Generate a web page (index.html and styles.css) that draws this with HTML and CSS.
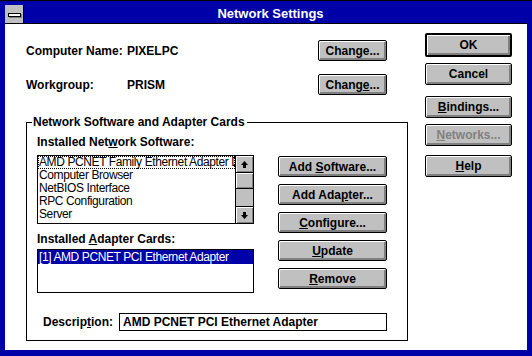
FILE: index.html
```html
<!DOCTYPE html>
<html lang="en">
<head>
    <meta charset="UTF-8">
    <title>Network Settings</title>
    <link rel="stylesheet" href="styles.css">
</head>
<body>

<div class="window">
    <div class="titlebar">
        <div class="sysmenu"><span class="sysbar"></span></div>
        <div class="title">Network Settings</div>
    </div>

    <div class="dialog">
        <div class="main">
            <div class="field-row first">
                <span class="label">Computer Name:</span>
                <span class="value">PIXELPC</span>
                <button class="btn change">Chan<u>g</u>e...</button>
            </div>
            <div class="field-row">
                <span class="label">Workgroup:</span>
                <span class="value">PRISM</span>
                <button class="btn change">Chang<u>e</u>...</button>
            </div>

            <fieldset class="group">
                <legend>Network Software and Adapter Cards</legend>
                <div class="group-body">
                    <div class="lists">
                        <div class="caption">Installed Net<u>w</u>ork Software:</div>
                        <div class="listbox software">
                            <ul class="items">
                                <li class="focus">AMD PCNET Family Ethernet Adapter Driver</li>
                                <li>Computer Browser</li>
                                <li>NetBIOS Interface</li>
                                <li>RPC Configuration</li>
                                <li>Server</li>
                            </ul>
                            <div class="scrollbar">
                                <div class="arrow">
                                    <svg width="9" height="9" viewBox="0 0 9 9"><path d="M4.5 1 L8 5 H6 V8 H3 V5 H1 Z" fill="#000"/></svg>
                                </div>
                                <div class="thumb"></div>
                                <div class="track"></div>
                                <div class="arrow">
                                    <svg width="9" height="9" viewBox="0 0 9 9"><path d="M4.5 8 L8 4 H6 V1 H3 V4 H1 Z" fill="#000"/></svg>
                                </div>
                            </div>
                        </div>

                        <div class="caption second">Installed <u>A</u>dapter Cards:</div>
                        <div class="listbox adapters">
                            <ul class="items">
                                <li class="selected">[1] AMD PCNET PCI Ethernet Adapter</li>
                            </ul>
                        </div>
                    </div>

                    <div class="actions">
                        <button class="btn wide">Add <u>S</u>oftware...</button>
                        <button class="btn wide">Add Ada<u>p</u>ter...</button>
                        <button class="btn wide"><u>C</u>onfigure...</button>
                        <button class="btn wide"><u>U</u>pdate</button>
                        <button class="btn wide"><u>R</u>emove</button>
                    </div>
                </div>

                <div class="desc-row">
                    <span class="desc-label">Descrip<u>t</u>ion:</span>
                    <div class="textbox">AMD PCNET PCI Ethernet Adapter</div>
                </div>
            </fieldset>
        </div>

        <div class="side">
            <button class="btn side-btn default">OK</button>
            <button class="btn side-btn cancel">Cancel</button>
            <button class="btn side-btn bindings"><u>B</u>indings...</button>
            <button class="btn side-btn disabled"><u>N</u>etworks...</button>
            <button class="btn side-btn help"><u>H</u>elp</button>
        </div>
    </div>
</div>

</body>
</html>
```

FILE: styles.css
```css
body {
    margin: 0;
    padding: 0;
    background-color: #0000a8;
    font-family: "Liberation Sans", Arial, sans-serif;
    font-size: 12px;
    color: #000;
}
.window {
    width: 522px;
    height: 345px;
    padding: 5px 5px 6px 5px;
    background-color: #0000a8;
    box-shadow: inset 0 1px 0 #000;
}
.titlebar {
    display: flex;
    height: 18px;
    border-bottom: 1px solid #000;
    background-color: #0000a8;
}
.sysmenu {
    width: 18px;
    border-right: 1px solid #000;
    background-color: #c0c0c0;
    display: flex;
    align-items: center;
    justify-content: center;
}
.sysbar {
    width: 11px;
    height: 2px;
    background-color: #fff;
    border: 1px solid #000;
    box-shadow: 1px 1px 0 #808080;
    margin-top: 1px;
}
.title {
    flex: 1;
    text-align: center;
    color: #fff;
    font-weight: bold;
    font-size: 13px;
    line-height: 18px;
    padding-right: 10px;
}
.dialog {
    display: flex;
    height: 326px;
    background-color: #fff;
}
.main {
    width: 381px;
    padding-left: 21px;
}
.field-row {
    display: flex;
    align-items: center;
    width: 361px;
    height: 21px;
    margin-top: 13px;
    font-weight: bold;
}
.field-row.first {
    margin-top: 16px;
}
.label {
    width: 101px;
}
.value {
    flex: 1;
}
.btn {
    font-family: "Liberation Sans", Arial, sans-serif;
    font-size: 12px;
    font-weight: bold;
    color: #000;
    background-color: #c0c0c0;
    border: 1px solid #000;
    border-radius: 2px;
    box-shadow: inset 1px 1px 0 #fff, inset -2px -2px 0 #808080;
    padding: 0;
    height: 21px;
    box-sizing: border-box;
    text-align: center;
}
.change {
    width: 69px;
}
.group {
    margin: 20px 0 0 0;
    padding: 0;
    width: 382px;
    height: 226px;
    box-sizing: border-box;
    border: 1px solid #000;
}
.group legend {
    margin-left: 5px;
    padding: 0 2px 0 1px;
    font-weight: bold;
    line-height: 14px;
}
.group-body {
    display: flex;
    padding-left: 10px;
}
.lists {
    width: 217px;
}
.caption {
    font-weight: bold;
    line-height: 14px;
    margin-top: 6px;
}
.caption.second {
    margin-top: 8px;
}
.listbox {
    display: flex;
    border: 1px solid #000;
    margin-top: 6px;
    box-sizing: border-box;
}
.software {
    height: 69px;
}
.adapters {
    height: 44px;
    margin-top: 3px;
}
.items {
    flex: 1;
    list-style: none;
    margin: 0;
    padding: 0;
    overflow: hidden;
}
.items li {
    height: 13px;
    line-height: 13px;
    padding-left: 1px;
    white-space: nowrap;
    overflow: hidden;
    letter-spacing: -0.4px;
}
.items li.focus {
    outline: 1px dotted #000;
    outline-offset: -1px;
}
.items li.selected {
    background-color: #0000a8;
    color: #fff;
    height: 14px;
    line-height: 14px;
}
.scrollbar {
    width: 17px;
    display: flex;
    flex-direction: column;
    border-left: 1px solid #000;
    background-color: #c0c0c0;
}
.arrow {
    height: 17px;
    box-sizing: border-box;
    display: flex;
    align-items: center;
    justify-content: center;
    background-color: #c0c0c0;
    box-shadow: inset 1px 1px 0 #fff, inset -1px -1px 0 #808080;
}
.arrow:first-child {
    border-bottom: 1px solid #000;
}
.arrow:last-child {
    border-top: 1px solid #000;
}
.thumb {
    height: 16px;
    box-sizing: border-box;
    border-bottom: 1px solid #000;
    background-color: #c0c0c0;
    box-shadow: inset 1px 1px 0 #fff, inset -1px -1px 0 #808080;
}
.track {
    flex: 1;
    background-color: #c0c0c0;
}
.actions {
    display: flex;
    flex-direction: column;
    gap: 7px;
    margin-left: 24px;
    padding-top: 27px;
}
.wide {
    width: 109px;
}
.desc-row {
    display: flex;
    align-items: center;
    margin-top: 20px;
    padding-left: 16px;
    font-weight: bold;
}
.desc-label {
    width: 76px;
}
.textbox {
    width: 268px;
    height: 18px;
    box-sizing: border-box;
    border: 1px solid #000;
    padding-left: 3px;
    line-height: 16px;
}
.side {
    display: flex;
    flex-direction: column;
    padding-top: 9px;
    margin-left: 18px;
}
.side-btn {
    width: 87px;
    height: 22px;
}
.side-btn.default {
    height: 24px;
    border-width: 2px;
}
.cancel {
    margin-top: 6px;
}
.bindings {
    margin-top: 11px;
}
.disabled {
    margin-top: 6px;
    color: #808080;
}
.help {
    margin-top: 9px;
}
```
